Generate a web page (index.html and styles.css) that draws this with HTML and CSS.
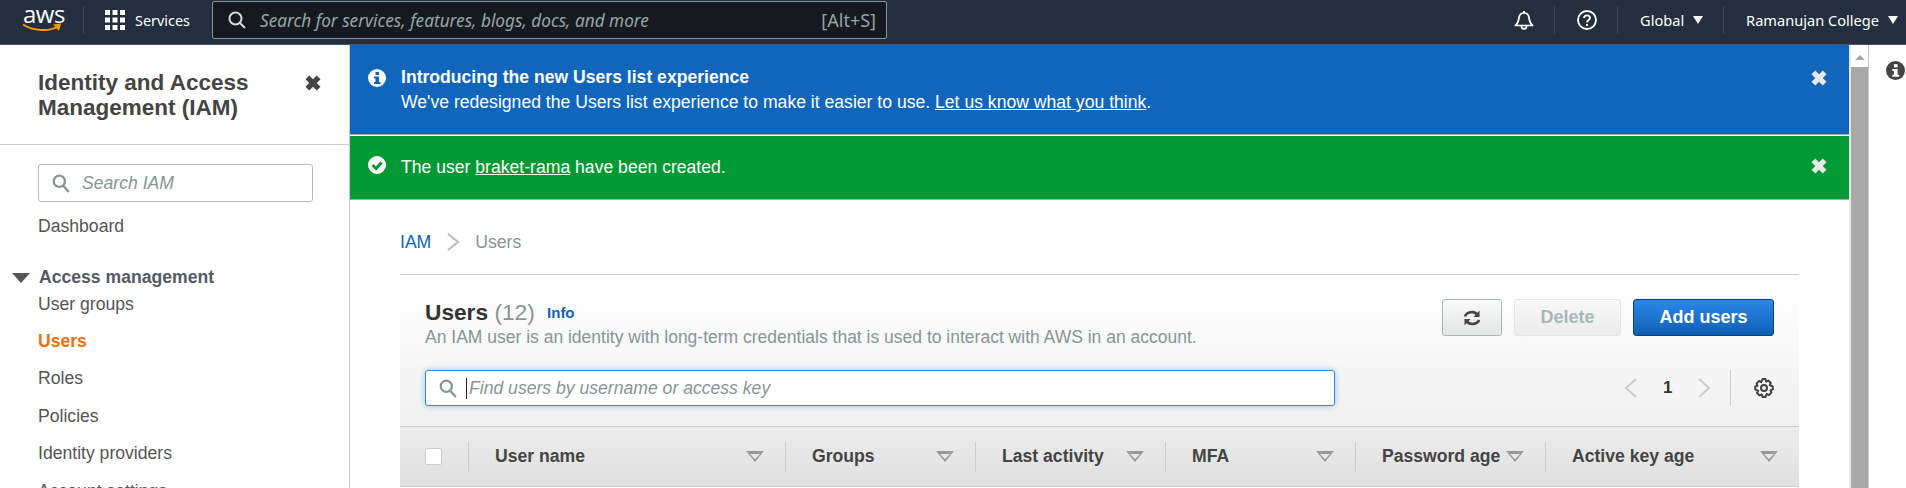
FILE: index.html
```html
<!DOCTYPE html>
<html lang="en">

<head>
  <meta charset="UTF-8" />
  <title>IAM Management Console</title>
  <link rel="stylesheet" href="styles.css">
</head>

<body>

  <header class="topbar">
    <div class="logo">
      <span class="logo-text">aws</span>
      <svg class="logo-smile" width="40" height="10" viewBox="0 0 40 10">
        <path d="M1 1.5C11 8 27 9 36 3.5" fill="none" stroke="#f90" stroke-width="2" />
        <path d="M31 1.5L39 0.5L37 8Z" fill="#f90" />
      </svg>
    </div>
    <div class="services">
      <svg width="20" height="20" viewBox="0 0 20 20" fill="#fff">
        <rect x="0" y="0" width="5" height="5" />
        <rect x="7.5" y="0" width="5" height="5" />
        <rect x="15" y="0" width="5" height="5" />
        <rect x="0" y="7.5" width="5" height="5" />
        <rect x="7.5" y="7.5" width="5" height="5" />
        <rect x="15" y="7.5" width="5" height="5" />
        <rect x="0" y="15" width="5" height="5" />
        <rect x="7.5" y="15" width="5" height="5" />
        <rect x="15" y="15" width="5" height="5" />
      </svg>
      <span>Services</span>
    </div>
    <div class="global-search">
      <svg width="18" height="18" viewBox="0 0 18 18" fill="none" stroke="#d5dbdb" stroke-width="2">
        <circle cx="7.5" cy="7.5" r="6" />
        <path d="M12 12L17 17" />
      </svg>
      <span class="global-placeholder">Search for services, features, blogs, docs, and more</span>
      <span class="shortcut">[Alt+S]</span>
    </div>
    <div class="top-right">
      <div class="top-item bell">
        <svg width="20" height="20" viewBox="0 0 20 20" fill="none" stroke="#fff" stroke-width="1.7">
          <path d="M1.5 15.5C4.5 13 4.5 11 5 7.5C5.5 4.5 7.5 3 10 3C12.5 3 14.5 4.5 15 7.5C15.5 11 15.5 13 18.5 15.5Z" stroke-linejoin="round" />
          <path d="M10 1V3" />
          <path d="M7.5 16C7.5 20 12.5 20 12.5 16" />
        </svg>
      </div>
      <div class="top-item help">
        <svg width="20" height="20" viewBox="0 0 20 20" fill="none" stroke="#fff" stroke-width="1.8">
          <circle cx="10" cy="10" r="9" />
          <path d="M7 8C7 4.5 13 4.5 13 8C13 10 10 10 10 12.5" />
          <path d="M10 14V16" />
        </svg>
      </div>
      <div class="top-item region">Global <i class="caret"></i></div>
      <div class="top-item account">Ramanujan College <i class="caret"></i></div>
    </div>
  </header>

  <div class="layout">

    <nav class="sidebar">
      <div class="side-head">
        <h2>Identity and Access Management (IAM)</h2>
        <svg class="side-close" width="20" height="20" viewBox="0 0 16 16">
          <path d="M2 5L5 2L8 5L11 2L14 5L11 8L14 11L11 14L8 11L5 14L2 11L5 8Z" fill="#444" />
        </svg>
      </div>
      <div class="side-search">
        <svg width="18" height="19" viewBox="0 0 16 17" fill="none" stroke="#879596" stroke-width="2">
          <circle cx="6.5" cy="6.5" r="5" />
          <path d="M10 10.5L15 16" />
        </svg>
        <span>Search IAM</span>
      </div>
      <a class="side-link dash">Dashboard</a>
      <div class="side-group"><i class="group-caret"></i>Access management</div>
      <a class="side-link first">User groups</a>
      <a class="side-link active">Users</a>
      <a class="side-link">Roles</a>
      <a class="side-link">Policies</a>
      <a class="side-link">Identity providers</a>
      <a class="side-link">Account settings</a>
    </nav>

    <main class="content">
      <div class="flash flash-info">
        <svg class="flash-icon" width="18" height="18" viewBox="0 0 18 18">
          <circle cx="9" cy="9" r="9" fill="#fff" />
          <rect x="7.5" y="3" width="3.5" height="3" fill="#16b" />
          <path d="M6 7.5H11V13H12.5V15H6V13H7.5V9.5H6Z" fill="#16b" />
        </svg>
        <div class="flash-text">
          <strong>Introducing the new Users list experience</strong>
          <div>We've redesigned the Users list experience to make it easier to use. <a>Let us know what you think</a>.</div>
        </div>
        <svg class="flash-close" width="20" height="20" viewBox="0 0 16 16">
          <path d="M2 5L5 2L8 5L11 2L14 5L11 8L14 11L11 14L8 11L5 14L2 11L5 8Z" fill="#e8e8e8" />
        </svg>
      </div>
      <div class="flash flash-success">
        <svg class="flash-icon" width="18" height="18" viewBox="0 0 18 18">
          <circle cx="9" cy="9" r="9" fill="#fff" />
          <path d="M4.5 9L8 12.5L13.5 6.5" fill="none" stroke="#093" stroke-width="3" />
        </svg>
        <div class="flash-text">The user <a>braket-rama</a> have been created.</div>
        <svg class="flash-close" width="20" height="20" viewBox="0 0 16 16">
          <path d="M2 5L5 2L8 5L11 2L14 5L11 8L14 11L11 14L8 11L5 14L2 11L5 8Z" fill="#e8e8e8" />
        </svg>
      </div>

      <div class="page">
        <div class="crumbs">
          <a>IAM</a>
          <svg width="14" height="18" viewBox="0 0 14 18" fill="none" stroke="#bbb" stroke-width="2">
            <path d="M2 1L12 9L2 17" />
          </svg>
          <span>Users</span>
        </div>

        <section class="panel">
          <div class="panel-top">
            <div class="panel-title">
              <h1>Users <span class="count">(12)</span> <a class="info-link">Info</a></h1>
              <p>An IAM user is an identity with long-term credentials that is used to interact with AWS in an account.</p>
            </div>
            <div class="actions">
              <button class="btn btn-refresh">
                <svg width="18" height="18" viewBox="0 0 18 18" fill="none" stroke="#444" stroke-width="2.6">
                  <path d="M2 7.5C3.5 2.5 11.5 1.5 14.5 6" />
                  <path d="M16 11C14.5 15.5 6.5 16.5 3.5 12" />
                  <path d="M16.5 1.5V8H10.5Z" fill="#444" stroke="none" />
                  <path d="M1.5 16.5V10H7.5Z" fill="#444" stroke="none" />
                </svg>
              </button>
              <button class="btn btn-delete">Delete</button>
              <button class="btn btn-add">Add users</button>
            </div>
          </div>
          <div class="panel-filter">
            <div class="find">
              <svg width="18" height="19" viewBox="0 0 16 17" fill="none" stroke="#879596" stroke-width="2">
                <circle cx="6.5" cy="6.5" r="5" />
                <path d="M10 10.5L15 16" />
              </svg>
              <span class="cursor"></span>
              <span>Find users by username or access key</span>
            </div>
            <div class="pager">
              <svg width="13" height="20" viewBox="0 0 13 20" fill="none" stroke="#ccc" stroke-width="2">
                <path d="M12 1L2 10L12 19" />
              </svg>
              <span>1</span>
              <svg width="13" height="20" viewBox="0 0 13 20" fill="none" stroke="#ccc" stroke-width="2">
                <path d="M1 1L11 10L1 19" />
              </svg>
            </div>
            <div class="prefs">
              <svg width="20" height="20" viewBox="0 0 20 20" fill="none" stroke="#444" stroke-width="2">
                <circle cx="10" cy="10" r="3" />
                <path d="M8.5 1H11.5L12 3.5L14.2 2.6L16.8 5L15.7 7.2L18.8 8.5V11.5L16.5 12.2L17.4 14.6L15 17L12.8 15.8L11.5 19H8.5L7.8 16.5L5.4 17.4L3 15L4.2 12.8L1.2 11.5V8.5L3.5 7.8L2.6 5.4L5 3L7.2 4.2Z" stroke-linejoin="round" />
              </svg>
            </div>
          </div>
          <div class="thead">
            <div class="th-check"><span class="checkbox"></span></div>
            <div class="th th-name">User name<i class="sort"></i></div>
            <div class="th">Groups<i class="sort"></i></div>
            <div class="th">Last activity<i class="sort"></i></div>
            <div class="th">MFA<i class="sort"></i></div>
            <div class="th">Password age<i class="sort"></i></div>
            <div class="th th-last">Active key age<i class="sort"></i></div>
          </div>
        </section>
      </div>
    </main>

    <div class="scrollbar">
      <div class="scroll-up"></div>
      <div class="scroll-thumb"></div>
    </div>

    <aside class="rail">
      <svg width="19" height="19" viewBox="0 0 18 18">
        <circle cx="9" cy="9" r="9" fill="#444" />
        <rect x="7.5" y="3" width="3.5" height="3" fill="#fff" />
        <path d="M6 7.5H11V13H12.5V15H6V13H7.5V9.5H6Z" fill="#fff" />
      </svg>
    </aside>

  </div>

</body>

</html>
```

FILE: styles.css
```css
* {
  box-sizing: border-box;
}

html,
body {
  margin: 0;
  height: 488px;
  overflow: hidden;
}

body {
  font-family: "Liberation Sans", Arial, sans-serif;
  font-size: 17.6px;
  color: #444;
  background: #fff;
}

h1,
h2,
p {
  margin: 0;
}

svg {
  display: block;
  flex: none;
}

/* top bar */

.topbar {
  display: flex;
  align-items: flex-start;
  height: 45px;
  background: #232f3e;
  border-bottom: 1px solid #4b5560;
  color: #fff;
  font-family: "Noto Sans", "Open Sans", sans-serif;
  font-size: 14px;
}

.logo {
  position: relative;
  width: 84px;
  height: 28px;
  margin-top: 6px;
  padding-left: 23px;
  border-right: 1px solid #3d4855;
}

.logo-text {
  display: block;
  margin-top: -2px;
  font-family: "Open Sans", sans-serif;
  font-size: 24px;
  line-height: 20px;
  letter-spacing: -0.5px;
}

.logo-smile {
  position: absolute;
  left: 22px;
  top: 17px;
}

.services {
  display: flex;
  align-items: center;
  gap: 10px;
  width: 128px;
  height: 40px;
  padding-left: 21px;
  font-size: 14.4px;
}

.global-search {
  display: flex;
  align-items: center;
  width: 675px;
  height: 38px;
  margin-top: 1px;
  padding: 0 10px 0 15px;
  background: #16191f;
  border: 1px solid #879596;
  border-radius: 2px;
  color: #95a5a6;
}

.global-placeholder {
  flex: 1;
  margin-left: 14px;
  font-size: 17.2px;
  font-style: italic;
}

.shortcut {
  font-size: 18px;
}

.top-right {
  display: flex;
  margin-left: auto;
  margin-top: 6px;
}

.top-item {
  display: flex;
  align-items: center;
  gap: 9px;
  height: 28px;
  border-right: 1px solid #3d4855;
  font-size: 14.6px;
}

.bell {
  width: 41px;
  padding-right: 20px;
}

.help {
  width: 63px;
  padding-left: 22px;
}

.region {
  width: 106px;
  padding-left: 22px;
}

.account {
  padding: 0 8px 0 22px;
  border-right: none;
}

.caret {
  width: 0;
  height: 0;
  border-left: 5px solid transparent;
  border-right: 5px solid transparent;
  border-top: 8px solid #fff;
}

/* layout */

.layout {
  display: flex;
  height: 443px;
}

/* sidebar */

.sidebar {
  width: 350px;
  flex: none;
  border-right: 1px solid #ccc;
}

.side-head {
  display: flex;
  justify-content: space-between;
  height: 100px;
  padding: 25px 26px 0 38px;
  border-bottom: 1px solid #ccc;
}

.side-head h2 {
  width: 240px;
  font-size: 22.5px;
  line-height: 25px;
  font-weight: 700;
  color: #444;
}

.side-close {
  margin-top: 3px;
}

.side-search {
  display: flex;
  align-items: center;
  gap: 12px;
  width: 275px;
  height: 38px;
  margin: 19px 0 0 38px;
  padding-left: 13px;
  border: 1px solid #bbb;
  border-radius: 3px;
  font-style: italic;
  color: #879596;
}

.side-link {
  display: block;
  height: 37.5px;
  line-height: 37px;
  padding-left: 38px;
  color: #555;
}

.side-link.dash {
  margin-top: 6px;
}

.side-link.first {
  height: 33px;
  line-height: 28px;
}

.side-link.active {
  color: #ec7211;
  font-weight: 700;
}

.side-group {
  display: flex;
  align-items: center;
  height: 24px;
  margin-top: 20px;
  padding-left: 12px;
  font-weight: 700;
  color: #545b64;
}

.group-caret {
  width: 0;
  height: 0;
  margin-right: 9px;
  border-left: 9px solid transparent;
  border-right: 9px solid transparent;
  border-top: 10px solid #555;
}

/* main column */

.content {
  flex: 1;
  min-width: 0;
}

.flash {
  display: flex;
  padding: 0 20px 0 18px;
  color: #fff;
  background: #16b;
}

.flash a {
  text-decoration: underline;
}

.flash-info {
  height: 90px;
  padding-top: 20px;
  border-bottom: 1px solid #aaa;
  line-height: 25px;
}

.flash-info .flash-icon {
  margin-top: 4px;
}

.flash-info .flash-close {
  margin-top: 3px;
}

.flash-success {
  height: 64px;
  margin-top: 1px;
  padding-top: 20px;
  background: #093;
  border-bottom: 1px solid #aaa;
  line-height: 22px;
}

.flash-text {
  flex: 1;
  margin-left: 15px;
}

/* page */

.page {
  padding: 0 50px;
}

.crumbs {
  display: flex;
  align-items: center;
  gap: 15px;
  height: 74px;
  padding-top: 10px;
  color: #879596;
}

.crumbs a {
  color: #16b;
}

.panel-top {
  display: flex;
  justify-content: space-between;
  height: 96px;
  padding: 24px 25px 0;
  border-top: 1px solid #ccc;
  background: linear-gradient(#fff, #f6f6f6);
}

.panel-title h1 {
  font-size: 22.7px;
  line-height: 26px;
  font-weight: 700;
  color: #333;
}

.panel-title .count {
  font-weight: 400;
  color: #879596;
}

.info-link {
  margin-left: 6px;
  font-size: 15px;
  color: #16b;
  vertical-align: 2px;
}

.panel-title p {
  margin-top: 1px;
  font-size: 17.5px;
  color: #879596;
  white-space: nowrap;
}

.actions {
  display: flex;
  gap: 12px;
}

.btn {
  height: 37px;
  font-family: inherit;
  font-size: 18px;
  font-weight: 700;
  border-radius: 3px;
}

.btn-refresh {
  display: flex;
  align-items: center;
  justify-content: center;
  width: 60px;
  background: linear-gradient(#fafafa, #e4e4e4);
  border: 1px solid #aab7b8;
}

.btn-delete {
  width: 107px;
  color: #aab7b8;
  background: linear-gradient(#f8f8f8, #ececec);
  border: 1px solid #e4e4e4;
}

.btn-add {
  width: 141px;
  color: #fff;
  background: linear-gradient(#2b88e8, #0f5fb3);
  border: 1px solid #0a3f7f;
}

.panel-filter {
  display: flex;
  align-items: center;
  height: 56px;
  padding: 0 25px 20px;
  background: linear-gradient(#f6f6f6, #f1f1f1);
}

.find {
  display: flex;
  align-items: center;
  flex: none;
  width: 910px;
  height: 36px;
  padding-left: 13px;
  background: #fff;
  border: 1px solid #2b88e8;
  border-radius: 3px;
  box-shadow: 0 0 6px rgba(43, 136, 232, 0.45);
  font-style: italic;
  color: #879596;
}

.cursor {
  width: 1px;
  height: 21px;
  margin: 0 2px 0 9px;
  background: #222;
}

.pager {
  display: flex;
  align-items: center;
  gap: 26px;
  margin-left: 289px;
  font-weight: 700;
  font-size: 17px;
  color: #333;
}

.prefs {
  display: flex;
  align-items: center;
  height: 36px;
  margin-left: 19px;
  padding-left: 23px;
  border-left: 1px solid #ccc;
}

.thead {
  display: flex;
  align-items: center;
  height: 61px;
  border-top: 1px solid #ccc;
  border-bottom: 1px solid #ccc;
  background: linear-gradient(#ececec, #e0e0e0);
  font-weight: 700;
  color: #444;
}

.th-check {
  flex: none;
  width: 68px;
  padding-left: 25px;
}

.checkbox {
  display: block;
  width: 17px;
  height: 17px;
  background: #fff;
  border: 1px solid #ccc;
  border-radius: 2px;
}

.th {
  display: flex;
  align-items: center;
  justify-content: space-between;
  flex: none;
  width: 190px;
  height: 30px;
  padding: 0 21px 0 26px;
  border-left: 1px solid #ccc;
  white-space: nowrap;
}

.th-name {
  width: 317px;
}

.th-last {
  width: 254px;
}

.sort {
  flex: none;
  width: 18px;
  height: 11px;
  background: #999;
  clip-path: polygon(0 0, 100% 0, 50% 100%, 0 0, 4px 3px, 50% 75%, calc(100% - 4px) 3px, 4px 3px);
}

/* scrollbar and help rail */

.scrollbar {
  width: 20px;
  flex: none;
  background: #fff;
  border-left: 2px solid #e8e8e8;
  border-right: 1px solid #ccc;
}

.scroll-up {
  width: 0;
  height: 0;
  margin: 10px auto 7px;
  border-left: 5px solid transparent;
  border-right: 5px solid transparent;
  border-bottom: 5px solid #aaa;
}

.scroll-thumb {
  height: 421px;
  background: #a8a8a8;
}

.rail {
  width: 37px;
  flex: none;
  padding: 16px 0 0 17px;
}
```
